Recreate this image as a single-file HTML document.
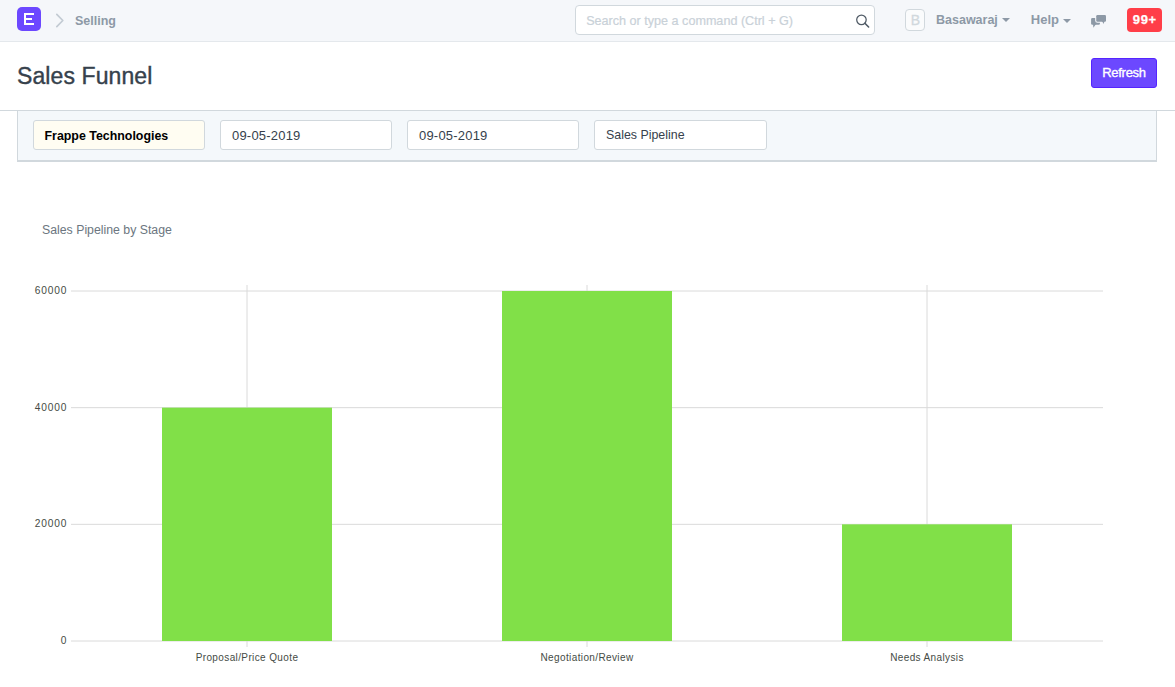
<!DOCTYPE html>
<html><head><meta charset="utf-8">
<style>
*{box-sizing:border-box;margin:0;padding:0}
html,body{width:1175px;height:687px;overflow:hidden;background:#fff;font-family:"Liberation Sans",sans-serif;position:relative}
.abs{position:absolute;white-space:nowrap}
#nav{left:0;top:0;width:1175px;height:42px;background:#f5f7fa;border-bottom:1px solid #e4e8ec}
#logo{left:17px;top:7px;width:24px;height:24px;background:#6c48ff;border-radius:5px}
#crumb{left:75px;top:13px;font-size:12.5px;font-weight:bold;color:#8d99a6;line-height:16px}
#search{left:575px;top:5px;width:300px;height:30px;background:#fff;border:1px solid #d1d8dd;border-radius:4px}
#search span{position:absolute;left:10.2px;top:7px;font-size:12.6px;color:#c9d1d8;-webkit-text-stroke:0.2px #c9d1d8;line-height:16px}
#avatar{left:905px;top:9px;width:20px;height:22px;border:1px solid #d1d8dd;border-radius:4px;background:#fafbfc;color:#d1d8dd;font-size:14px;line-height:20px;text-align:center;padding-left:1px;-webkit-text-stroke:0.3px #d1d8dd}
.navtxt{font-size:13px;font-weight:bold;color:#8d99a6;line-height:16px;top:12px}
.caret{width:0;height:0;border-left:4px solid transparent;border-right:4px solid transparent;border-top:4px solid #8d99a6}
#badge{left:1127px;top:8px;width:35px;height:24px;background:#ff3e48;border-radius:4px;color:#fff;font-weight:bold;font-size:13px;line-height:24px;text-align:center;letter-spacing:0.6px;text-indent:0.6px;-webkit-text-stroke:0.25px #fff}
#title{left:17px;top:61px;font-size:23px;letter-spacing:0.1px;color:#36414c;line-height:30px;-webkit-text-stroke:0.4px #36414c}
#refresh{left:1091px;top:58px;width:66px;height:30px;background:#6c48ff;border:1px solid #5524ff;border-radius:3px;color:#fff;font-size:13px;letter-spacing:-0.3px;-webkit-text-stroke:0.35px #fff;line-height:28px;text-align:center}
#topline{left:0;top:110px;width:1175px;height:1px;background:#d1d8dd}
#filters{left:17px;top:111px;width:1140px;height:51px;background:#f4f8fb;border:1px solid #d1d8dd;border-top:none;border-bottom:2px solid #d1d8dd}
.inp{top:120px;width:172px;height:30px;background:#fff;border:1px solid #d1d8dd;border-radius:3px;font-size:12.4px;color:#36414c;line-height:29px;padding-left:11px}
#chart-title{left:42px;top:222px;font-size:12.3px;color:#6c7680;line-height:16px}
svg text{font-family:"Liberation Sans",sans-serif}
</style></head><body>
<div id="nav" class="abs"></div>
<div id="logo" class="abs"><svg style="position:absolute;left:0;top:0" width="24" height="24" viewBox="0 0 24 24"><path d="M7 6 H17 V8 H9 V11 H15 V13 H9 V16 H17 V18 H7 Z" fill="#fff"/></svg></div>
<svg class="abs" style="left:55px;top:13px" width="10" height="15" viewBox="0 0 10 15"><path d="M1.8 1.3 L7.8 7.5 L1.8 13.7" fill="none" stroke="#c3cbd3" stroke-width="1.7" stroke-linecap="round" stroke-linejoin="round"/></svg>
<div id="crumb" class="abs">Selling</div>
<div id="search" class="abs"><span>Search or type a command (Ctrl + G)</span>
<svg style="position:absolute;left:280px;top:8px" width="15" height="15" viewBox="0 0 15 15"><circle cx="5.45" cy="5.85" r="4.75" fill="none" stroke="#4f5a65" stroke-width="1.25"/><path d="M8.9 9.3 L12.6 13" stroke="#4f5a65" stroke-width="1.6" stroke-linecap="round"/></svg>
</div>
<div id="avatar" class="abs">B</div>
<div class="abs navtxt" style="left:936px;font-size:12.5px">Basawaraj</div>
<div class="abs caret" style="left:1002px;top:18px"></div>
<div class="abs navtxt" style="left:1030.8px">Help</div>
<div class="abs caret" style="left:1063px;top:19px"></div>
<svg class="abs" style="left:1086px;top:10px" width="26" height="22" viewBox="0 0 26 22"><rect x="5.1" y="8" width="8.8" height="6.7" rx="1.2" fill="#8d99a6"/><path d="M7 14 L10 14 L7.4 17.8 Z" fill="#8d99a6"/><g stroke="#f5f7fa" stroke-width="2.2" stroke-linejoin="round"><rect x="10.25" y="4.96" width="9.75" height="6.73" rx="1.2" fill="#8d99a6"/><path d="M16 11 L18.3 11 L17.8 14.1 Z" fill="#8d99a6"/></g><rect x="10.25" y="4.96" width="9.75" height="6.73" rx="1.2" fill="#8d99a6"/><path d="M15.9 11 L18.4 11 L17.8 14.1 Z" fill="#8d99a6"/></svg>
<div id="badge" class="abs">99+</div>

<div id="title" class="abs">Sales Funnel</div>
<div id="refresh" class="abs">Refresh</div>

<div id="topline" class="abs"></div>
<div id="filters" class="abs"></div>
<div class="abs inp" style="left:33px;background:#fffdf2;font-weight:bold;color:#000;padding-left:10.5px;line-height:30.5px">Frappe Technologies</div>
<div class="abs inp" style="left:220px;font-size:13px;letter-spacing:0.2px">09-05-2019</div>
<div class="abs inp" style="left:407px;font-size:13px;letter-spacing:0.2px">09-05-2019</div>
<div class="abs inp" style="left:594px;width:173px">Sales Pipeline</div>

<div id="chart-title" class="abs">Sales Pipeline by Stage</div>
<svg class="abs" style="left:0;top:0" width="1175" height="687" viewBox="0 0 1175 687">
<g stroke="#dadada" stroke-width="1" fill="none">
<line x1="71" y1="291" x2="1103" y2="291"/>
<line x1="71" y1="407.67" x2="1103" y2="407.67"/>
<line x1="71" y1="524.33" x2="1103" y2="524.33"/>
<line x1="71" y1="641" x2="1103" y2="641"/>
<line x1="247" y1="285" x2="247" y2="647"/>
<line x1="587" y1="285" x2="587" y2="647"/>
<line x1="927" y1="285" x2="927" y2="647"/>
</g>
<g fill="#81e048">
<rect x="162" y="407.67" width="170" height="233.33"/>
<rect x="502" y="291" width="170" height="350"/>
<rect x="842" y="524.33" width="170" height="116.67"/>
</g>
<g font-size="10.2" fill="#454b45" text-anchor="end" letter-spacing="0.85">
<text x="67.4" y="294">60000</text>
<text x="67.4" y="410.7">40000</text>
<text x="67.4" y="527.3">20000</text>
<text x="67.4" y="644">0</text>
</g>
<g font-size="10" fill="#454b45" text-anchor="middle" letter-spacing="0.38">
<text x="247" y="661">Proposal/Price Quote</text>
<text x="587" y="661">Negotiation/Review</text>
<text x="927" y="661">Needs Analysis</text>
</g>
</svg>
</body></html>
